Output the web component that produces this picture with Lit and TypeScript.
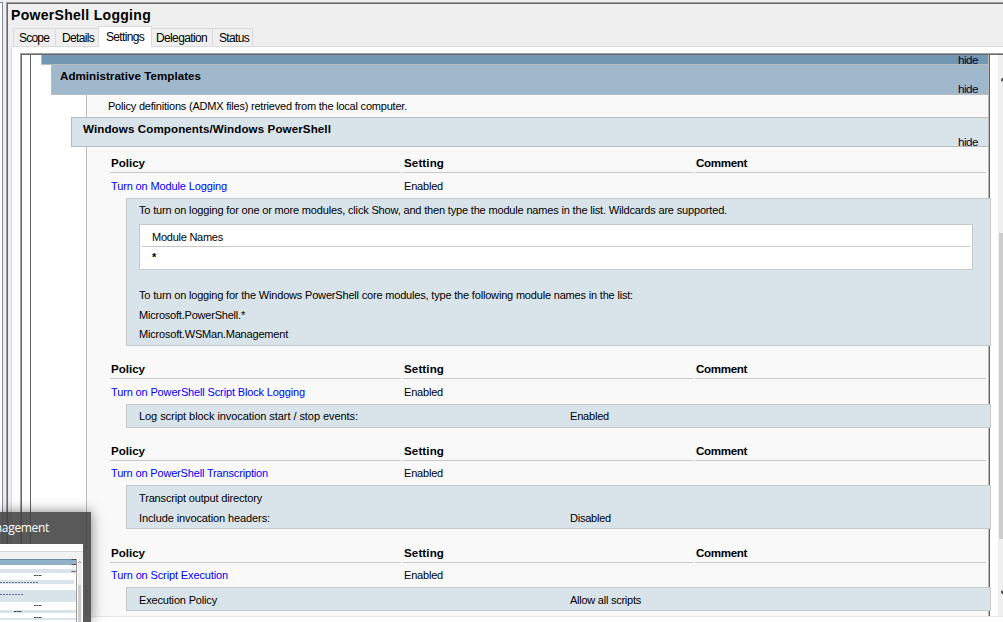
import { LitElement, html, css } from "lit";
import { customElement } from "lit/decorators.js";

// A label set to a given advance width, in pixels, by tracking.
const t = (text: string, width: number, cls = "") =>
  html`<span class="t ${cls}" data-w=${width}>${text}</span>`;

interface Group {
  name: string;
  width: number;
  cls: string;
  panel: unknown;
}

const option = (name: string, w: number, value = "", vw = 0) => html`
  <div class="option"><div class="optname">${t(name, w)}</div>${value ? t(value, vw) : ""}</div>`;

const groups: Group[] = [
  {
    name: "Turn on Module Logging", width: 116, cls: "g1",
    panel: html`
      <div class="line first">${t("To turn on logging for one or more modules, click Show, and then type the module names in the list. Wildcards are supported.", 588)}</div>
      <div class="modules">
        <div class="mhead">${t("Module Names", 71)}</div>
        <div class="mrow">${t("*", 5, "star")}</div>
      </div>
      <div class="line">${t("To turn on logging for the Windows PowerShell core modules, type the following module names in the list:", 494)}</div>
      <div class="line">${t("Microsoft.PowerShell.*", 106)}</div>
      <div class="line">${t("Microsoft.WSMan.Management", 149)}</div>`,
  },
  {
    name: "Turn on PowerShell Script Block Logging", width: 194, cls: "g2",
    panel: option("Log script block invocation start / stop events:", 219, "Enabled", 39),
  },
  {
    name: "Turn on PowerShell Transcription", width: 157, cls: "g3",
    panel: html`${option("Transcript output directory", 123)}${option("Include invocation headers:", 131, "Disabled", 41)}`,
  },
  {
    name: "Turn on Script Execution", width: 117, cls: "g4",
    panel: option("Execution Policy", 78, "Allow all scripts", 71),
  },
];

@customElement("app-root")
export class AppRoot extends LitElement {
  static styles = css`
    * { box-sizing: border-box; }
    :host {
      display: flex; position: relative; width: 1003px; height: 622px; overflow: hidden;
      background: #efefef; color: #000; padding-top: 2px;
      font: 11px/14px "Liberation Sans", Arial, sans-serif;
    }
    .t { white-space: pre; display: inline-block; }
    .tree { width: 3px; flex: none; background: #fff; border-right: 1px solid #838a92; border-top: 1px solid #838a92; }
    .frame {
      margin-left: 3px; flex: 1; min-width: 0; display: flex; flex-direction: column;
      border-left: 1px solid #a0a0a0; border-top: 1px solid #a0a0a0;
    }
    .inner { flex: 1; min-height: 0; display: flex; flex-direction: column; border-left: 1px solid #696969; border-top: 1px solid #696969; padding-left: 3px; }
    .title { height: 22px; font-size: 14px; line-height: 22px; font-weight: bold; flex: none; }
    .tabs { height: 20px; flex: none; display: flex; align-items: flex-end; padding-left: 2px; }
    .tab { height: 18px; border: 1px solid #d9d9d9; border-bottom: 0; border-left: 0; padding: 2px 0 0 6px; font-size: 12px; }
    .tab:first-child { border-left: 1px solid #d9d9d9; padding-left: 5px; }
    .scope { width: 43px; } .details { width: 42px; border-right: 0; } .delegation { width: 61px; padding-left: 4px; } .status { width: 40px; }
    .settings { width: 54px; height: 21px; margin-bottom: -1px; background: #fff; border-left: 1px solid #d9d9d9; padding: 3px 0 0 7px; position: relative; }
    .page { flex: 1; min-height: 0; background: #fff; border-left: 1px solid #dcdcdc; border-top: 1px solid #dcdcdc; padding: 6px 0 0 8px; display: flex; flex-direction: column; }
    .view {
      height: 563px; flex: none; display: flex; overflow: hidden;
      border-left: 1px solid #a0a0a0; border-top: 1px solid #a0a0a0; 
    }
    .view2 { flex: 1; display: flex; border-left: 1px solid #696969; border-top: 1px solid #696969; padding-left: 8px; }
    .report { width: 960px; flex: none; border-left: 1px solid #606060; border-right: 1px solid #606060; height: 561px; }
    .bar { display: flex; justify-content: space-between; border: 1px solid #bbb; font-weight: bold; position: relative; }
    .hide { font-weight: normal; align-self: flex-end; margin-right: 10px; height: 14px; color: #000033; font-size: 11.6px; margin-bottom: -2px; }
    .b0 { margin-left: 10px; height: 10px; background: #7197b3; border-top: 0; justify-content: flex-end; }
    .b0 .hide { margin-bottom: -3px; }
    .b1 { margin-left: 20px; height: 30px; background: #a0b8cb; border-top: 0; padding: 4px 0 0 8px; }
    .b2 { margin-left: 40px; height: 30px; background: #d9e3ea; padding: 4px 0 0 11px; }
    .b2 .hide { margin-bottom: -3px; }
    .bar .h { font-size: 11.6px; }
    .note { margin-left: 55px; height: 22px; border-left: 1px solid #bbb; border-right: 1px solid #bbb; background: #f9f9f9; padding: 4px 0 0 21px; }
    .body { margin-left: 55px; height: 469px; border-left: 1px solid #bbb; border-right: 1px solid #bbb; background: #f9f9f9; padding-left: 23px; }
    .cols { display: grid; grid-template-columns: 291px 290px 291px; column-gap: 2px; width: 876px; }
    .col { height: 26px; border-bottom: 1px solid #c8c8c8; padding: 9px 0 0 1px; font-weight: bold; font-size: 11.6px; }
    .row { display: flex; height: 25px; padding: 6px 0 0 1px; }
    .link { color: #0000ff; width: 293px; }
    .panel { position: relative; margin: 0 -3px 0 16px; border: 1px solid #c8c8c8; background: #d9e3ea; padding-left: 12px; }
    .g1 .panel { height: 148px; margin-bottom: 7px; }
    .g2 .panel { height: 24px; margin-bottom: 7px; padding-top: 1px; }
    .g3 .panel { height: 44px; margin-bottom: 8px; padding-top: 2px; }
    .g4 .panel { height: 24px; padding-top: 2px; }
    .g3 .row, .g4 .row { height: 24px; padding-top: 5px; }
    .option { display: flex; height: 20px; padding-top: 3px; }
    .optname { width: 431px; }
    .line { height: 19.5px; padding-top: 2px; }
    .first { height: 25px; padding-top: 4px; }
    .modules { width: 834px; height: 46px; border: 1px solid #c8c8c8; background: #fff; padding: 0 2px; margin-bottom: 16px; }
    .mhead { height: 22px; border-bottom: 1px solid #c8c8c8; padding: 5px 0 0 10px; }
    .mrow { padding: 3px 0 0 10px; }
    .star { font-weight: bold; }
    .gutter { flex: 1; background: #fff; padding-left: 8px; }
    .scroll { height: 100%; background: #f0f0f0; padding-left: 1px; display: flex; flex-direction: column; }
    .arrow { width: 4px; height: 178px; padding: 20px 0 0 2px; flex: none; }
    .arrow svg { display: block; }
    .arrow.down { padding-top: 50px; height: 76px; }
    .thumb { height: 306px; background: #cdcdcd; flex: none; }
    .foot { height: 1px; background: #e6e6e6; flex: none; }
    .preview {
      position: absolute; left: 0; top: 512px; width: 91px; height: 110px;
      background: rgba(66, 66, 66, 0.88); box-shadow: 0 0 12px rgba(0, 0, 0, 0.5);
    }
    .caption { height: 32px; width: 49px; display: flex; justify-content: flex-end; align-items: center; color: #fff; font: 12px/16px "Open Sans", sans-serif; }
    .mini { display: block; }
  `;

  firstUpdated() {
    this.renderRoot.querySelectorAll<HTMLElement>(".t").forEach((el) => {
      const w = Number(el.dataset.w);
      const natural = el.getBoundingClientRect().width;
      el.style.letterSpacing = `${(w - natural) / (el.textContent ?? "").length}px`;
    });
  }

  render() {
    const hide = html`<span class="hide">${t("hide", 20)}</span>`;
    return html`
      <div class="tree"></div>
      <div class="frame"><div class="inner">
        <div class="title">${t("PowerShell Logging", 140)}</div>
        <div class="tabs">
          <div class="tab scope">${t("Scope", 30)}</div>
          <div class="tab details">${t("Details", 32)}</div>
          <div class="tab settings">${t("Settings", 38)}</div>
          <div class="tab delegation">${t("Delegation", 51)}</div>
          <div class="tab status">${t("Status", 30)}</div>
        </div>
        <div class="page">
          <div class="view"><div class="view2">
            <div class="report">
              <div class="bar b0">${hide}</div>
              <div class="bar b1">${t("Administrative Templates", 141, "h")}${hide}</div>
              <div class="note">${t("Policy definitions (ADMX files) retrieved from the local computer.", 299)}</div>
              <div class="bar b2">${t("Windows Components/Windows PowerShell", 248, "h")}${hide}</div>
              <div class="body">
                ${groups.map((g) => html`
                  <div class=${g.cls}>
                    <div class="cols">
                      <div class="col">${t("Policy", 34)}</div>
                      <div class="col">${t("Setting", 40)}</div>
                      <div class="col">${t("Comment", 51)}</div>
                    </div>
                    <div class="row"><div class="link">${t(g.name, g.width)}</div>${t("Enabled", 39)}</div>
                    <div class="panel">${g.panel}</div>
                  </div>`)}
              </div>
            </div>
            <div class="gutter"><div class="scroll">
              <div class="arrow"><svg width="4" height="8" viewBox="0 0 4 8"><path d="M0 6L4 2" stroke="#555" stroke-width="2.4" fill="none"/></svg></div>
              <div class="thumb"></div>
              <div class="arrow down"><svg width="4" height="8" viewBox="0 0 4 8"><path d="M0 2L4 6" stroke="#555" stroke-width="2.4" fill="none"/></svg></div>
            </div></div>
          </div></div>
          <div class="foot"></div>
        </div>
      </div></div>
      <div class="preview">
        <div class="caption">${t("Management", 71)}</div>
        <svg class="mini" width="83" height="78" viewBox="0 0 83 78">
          <rect width="83" height="78" fill="#fff"/>
          <rect y="7" width="83" height="1" fill="#d8d8d8"/>
          <rect y="8" width="83" height="7" fill="#f2f2f2"/>
          <rect y="15" width="77" height="6" fill="#91b1c8"/>
          <rect y="15" width="77" height="1" fill="#6c8ea6"/>
          <rect y="25" width="77" height="4" fill="#d9e3ea"/>
          <rect y="36" width="74" height="4" fill="#d9e3ea"/>
          <rect y="46" width="77" height="12" fill="#d9e3ea"/>
          <rect y="66" width="77" height="3" fill="#d9e3ea"/>
          <rect y="74" width="77" height="2" fill="#d9e3ea"/>
          <rect x="76" y="15" width="1" height="63" fill="#999"/>
          <rect x="78" y="15" width="4" height="63" fill="#eee"/>
          <rect x="78" y="41" width="3" height="37" fill="#ccc"/>
          <path d="M71.500 15.500h5M71.500 20.500h5M71.500 27.500h4M34 31.500h8M34 61.500h8M14 67.500h8M34 73.500h8" stroke="#444" stroke-width="1" stroke-dasharray="2 .5"/>
          <path d="M0 38.500h38M0 50.500h24" stroke="#669" stroke-width="1" stroke-dasharray="2 1"/>
          <path d="M78 19l1.500-1.500L81 19" stroke="#888" fill="none"/>
        </svg>
      </div>`;
  }
}
